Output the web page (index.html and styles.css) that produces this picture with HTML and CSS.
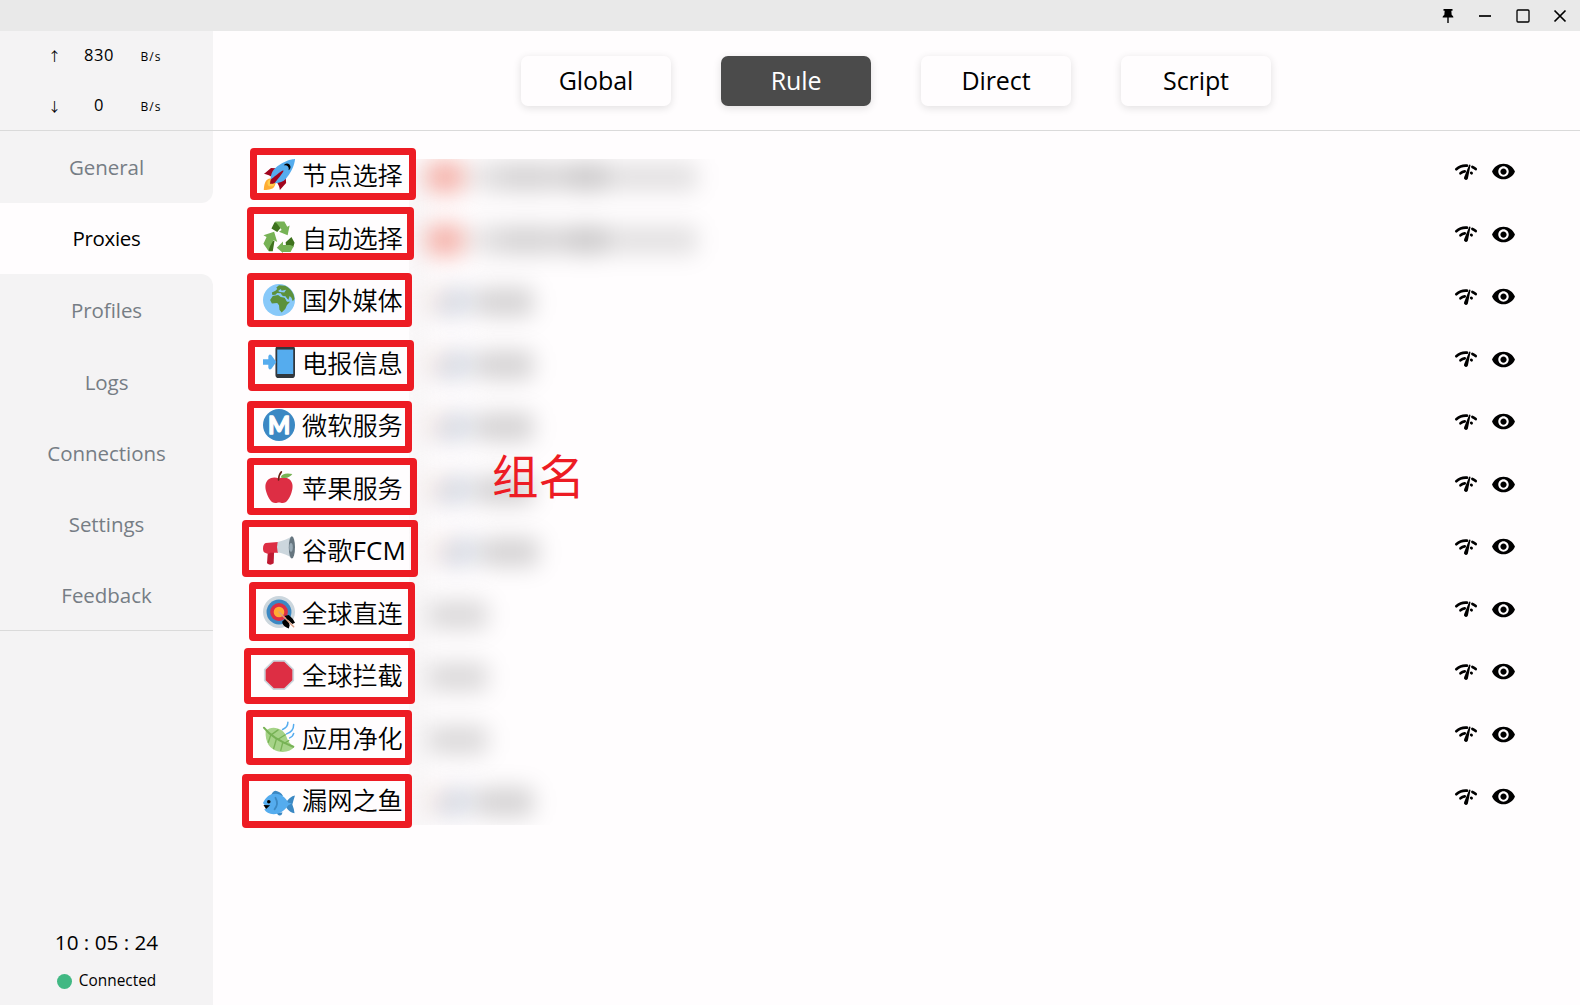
FILE: index.html
```html
<!DOCTYPE html>
<html lang="zh-CN">
<head>
<meta charset="utf-8">
<title>Proxies</title>
<link rel="stylesheet" href="styles.css">
</head>
<body>
<svg class="defs" width="0" height="0" aria-hidden="true">
  <symbol id="check" viewBox="0 0 24 24">
    <g fill="none" stroke="currentColor" stroke-width="2.7" stroke-linecap="round">
      <path d="M2.300 9.200C5.300 6.500 9 5.200 13 5.600"/>
      <path d="M18.400 6.900C19.700 7.500 20.700 8.200 21.700 9.100"/>
      <path d="M6.500 13.300C7.800 12.200 9.200 11.600 10.700 11.400"/>
      <path d="M17.200 12.900L17.600 13.200"/>
    </g>
    <path fill="currentColor" d="M15.200 4.800Q16.300 4.200 16.500 5.300L13.900 18.600A2 2 0 0 1 10.100 17.200Z"/>
  </symbol>
  <symbol id="eye" viewBox="0 0 24 24">
    <path fill="currentColor" d="M12 4.500C7 4.500 2.730 7.610 1 12c1.730 4.390 6 7.500 11 7.500s9.270-3.110 11-7.500c-1.730-4.390-6-7.500-11-7.500zM12 17c-2.760 0-5-2.240-5-5s2.240-5 5-5 5 2.240 5 5-2.240 5-5 5zm0-8c-1.660 0-3 1.340-3 3s1.340 3 3 3 3-1.340 3-3-1.340-3-3-3z"/>
  </symbol>
</svg>

<header class="titlebar">
  <svg class="win" viewBox="0 0 16 16"><path d="M3.500 1h9v1.700h-1.200l.4 4.300c1 .5 1.700 1.300 1.700 2.600H8.700V15H7.300V9.600H2.600C2.600 8.300 3.300 7.500 4.300 7l.4-4.300H3.500z"/></svg>
  <svg class="win line" viewBox="0 0 16 16"><path d="M2 8h12"/></svg>
  <svg class="win line thin" viewBox="0 0 16 16"><rect x="2" y="2" width="12" height="12" rx="1"/></svg>
  <svg class="win line" viewBox="0 0 16 16"><path d="M2.500 2.500l11 11M13.500 2.500l-11 11"/></svg>
</header>

<div class="app">
  <aside class="sidebar">
    <div class="traffic">
      <div class="speed"><span class="arrow">↑</span><span class="num">830</span><span class="unit">B/s</span></div>
      <div class="speed"><span class="arrow">↓</span><span class="num">0</span><span class="unit">B/s</span></div>
    </div>
    <nav class="menu">
      <a class="item before">General</a>
      <a class="item active">Proxies</a>
      <a class="item after">Profiles</a>
      <a class="item">Logs</a>
      <a class="item">Connections</a>
      <a class="item">Settings</a>
      <a class="item">Feedback</a>
    </nav>
    <div class="status">
      <div class="clock">10 : 05 : 24</div>
      <div class="conn"><i class="dot"></i><span>Connected</span></div>
    </div>
  </aside>

  <main class="main">
    <div class="modes">
      <button class="mode">Global</button>
      <button class="mode on">Rule</button>
      <button class="mode">Direct</button>
      <button class="mode">Script</button>
    </div>

    <div class="groups">
      <div class="current">
        <div class="now long"><i class="flag red"></i><i class="a"></i><i class="b"></i><i class="c"></i></div>
        <div class="now long"><i class="flag red"></i><i class="a"></i><i class="b"></i><i class="c"></i></div>
        <div class="now auto"><i class="flag us"></i><i class="t"></i></div>
        <div class="now auto"><i class="flag us"></i><i class="t"></i></div>
        <div class="now auto"><i class="flag us"></i><i class="t"></i></div>
        <div class="now auto"><i class="flag us"></i><i class="t"></i></div>
        <div class="now auto wide"><i class="flag us"></i><i class="t"></i></div>
        <div class="now short"><i class="t"></i></div>
        <div class="now short"><i class="t"></i></div>
        <div class="now short"><i class="t"></i></div>
        <div class="now auto"><i class="flag us"></i><i class="t"></i></div>
      </div>

      <div class="row">
        <svg class="emoji" viewBox="0 0 36 36"><path fill="#A0041E" d="M1 17l8-7 16 1 1 16-7 8s.001-5.999-6-12-12-6-12-6z"/><path fill="#FFAC33" d="M.973 35s-.036-7.979 2.985-11S15 21.187 15 21.187 14.999 29 11.999 32c-3 3-11.026 3-11.026 3z"/><circle fill="#FFCC4D" cx="9" cy="27" r="4"/><path fill="#55ACEE" d="M35.999 0s-10 0-22 10c-6 5-6 14-4 16s11 2 16-4c10-12 10-22 10-22z"/><path d="M26.999 5c-1.623 0-3.013.971-3.641 2.360.502-.227 1.055-.360 1.641-.360 2.209 0 4 1.791 4 4 0 .586-.133 1.139-.359 1.640 1.389-.627 2.359-2.017 2.359-3.640 0-2.209-1.791-4-4-4z"/><path fill="#A0041E" d="M8 28s0-4 1-5 13.001-10.999 14-10-9.001 13-10.001 14S8 28 8 28z"/></svg>
        <span class="name">节点选择</span>
        <span class="acts"><svg class="chk"><use href="#check"/></svg><svg class="see"><use href="#eye"/></svg></span>
      </div>
      <div class="row">
        <svg class="emoji" viewBox="0 0 36 36"><path fill="#3E721D" d="M9.500 8.500L13 1.500 17.500 1l3 6L16 12.500zM25.500 24l6.500-6 3.500 6.500-1.500 5h-8zM2 24l11-2-2 12H6.500z"/><path fill="#77B255" d="M13.500.5h10.500l3.300 6 2.700-1.500-2.300 11L18 12l3-1.800L16.500 4zM.5 25.500l3.500-7.500L.5 16l12-4L16 23.500 12 21.500 8 28l-2 5.500zM34.500 28.500l-3.500 6.500H22.500v1L15.500 30l7-7v4h8z"/></svg>
        <span class="name">自动选择</span>
        <span class="acts"><svg class="chk"><use href="#check"/></svg><svg class="see"><use href="#eye"/></svg></span>
      </div>
      <div class="row">
        <svg class="emoji" viewBox="0 0 36 36"><circle fill="#88C9F9" cx="18" cy="18" r="18"/><path fill="#5C913B" d="M15 4l3-2.500 7 .5c4 2 7.500 5.500 9.500 10l1 5-2 2.500-1.500-4-2-2-1.500 4.500-3-3.500-4-1.500-1.500-2.500-4-.5-2 2-3.500.5-.5-3 4-2 2-2z"/><path fill="#5C913B" d="M8 18l3-4.500 6-1 3 2 4.500 1 2.500 4.500h3.500L27 23.500l-2 4.500-4 4-2.500-3-.5-5-2-2.500-6 .5z"/><path fill="#88C9F9" d="M17 8l3-2.500 1 2 5-1-2 3-5-.5zM23.500 14l1.500-.5 3.500 5-1.500.5z"/></svg>
        <span class="name">国外媒体</span>
        <span class="acts"><svg class="chk"><use href="#check"/></svg><svg class="see"><use href="#eye"/></svg></span>
      </div>
      <div class="row">
        <svg class="emoji" viewBox="0 0 36 36"><rect x="14" width="22" height="36" rx="3.500" fill="#31373D"/><rect x="16" y="4" width="18" height="27.500" fill="#55ACEE"/><path fill="#55ACEE" d="M0 15h6v-3.500q1-3 3.500-1L15 18l-5.500 7.500q-2.500 2-3.500-1V21H0z"/></svg>
        <span class="name">电报信息</span>
        <span class="acts"><svg class="chk"><use href="#check"/></svg><svg class="see"><use href="#eye"/></svg></span>
      </div>
      <div class="row">
        <svg class="emoji" viewBox="0 0 36 36"><circle fill="#3B88C3" cx="18" cy="18" r="18"/><text class="letter" x="18" y="28" textLength="25" lengthAdjust="spacingAndGlyphs">M</text></svg>
        <span class="name">微软服务</span>
        <span class="acts"><svg class="chk"><use href="#check"/></svg><svg class="see"><use href="#eye"/></svg></span>
      </div>
      <div class="row">
        <svg class="emoji" viewBox="0 0 36 36"><path fill="#DD2E44" d="M18 8.500C22 6.500 27 7 30 9.500c4 3.500 4 9 2 15-2 6-5 11.500-10 11.500-1.500 0-2.500-.7-4-.7s-2.500.7-4 .7C9 36 6 30.500 4 24.500c-2-6-2-11.500 2-15C9 7 14 6.500 18 8.500z"/><path fill="#77B255" d="M20 7c1-3.500 6-5 13-3.500C31 7 25 9.500 20 7z"/><path fill="none" stroke="#662113" stroke-width="1.800" stroke-linecap="round" d="M17.500 10C17.500 6.500 18.500 3.500 20.700 1"/></svg>
        <span class="name">苹果服务</span>
        <span class="acts"><svg class="chk"><use href="#check"/></svg><svg class="see"><use href="#eye"/></svg></span>
      </div>
      <div class="row">
        <svg class="emoji" viewBox="0 0 36 36"><path fill="#BE1931" d="M5.500 19h7L12 33q-4 3-7.500 0z"/><path fill="#DD2E44" d="M3 10l14-1v12H8q-1.500 2-5 .5-3-1-3-5 0-5.500 3-6.500z"/><path fill="#CCD6DD" d="M16.500 9C22 7.500 28 5.500 32 3v24c-4-3.500-9-5-15.500-6.500q-1.500-6 0-11.500z"/><ellipse cx="32.500" cy="15" rx="3.500" ry="12.500" fill="#66757F"/><ellipse cx="31.500" cy="15" rx="2" ry="5" fill="#99AAB5"/></svg>
        <span class="name">谷歌<span class="latin">FCM</span></span>
        <span class="acts"><svg class="chk"><use href="#check"/></svg><svg class="see"><use href="#eye"/></svg></span>
      </div>
      <div class="row">
        <svg class="emoji" viewBox="0 0 36 36"><circle cx="18" cy="18" r="18" fill="#CCD6DD"/><circle cx="18" cy="18" r="14" fill="#3B88C3"/><circle cx="18" cy="18" r="10" fill="#DD2E44"/><circle cx="18" cy="18" r="6" fill="#FFAC33"/><path d="M21.500 29l5.500-5.500L30 33l-1 3.500q-7-2-7.500-7.500zM24 22.500l5-1q5 4 7 8.500l-3 1.500z"/><path fill="none" stroke="#D99E82" stroke-width="1.700" stroke-linecap="round" d="M18 18L34.500 34.500"/></svg>
        <span class="name">全球直连</span>
        <span class="acts"><svg class="chk"><use href="#check"/></svg><svg class="see"><use href="#eye"/></svg></span>
      </div>
      <div class="row">
        <svg class="emoji" viewBox="0 0 36 36"><path fill="#CCD6DD" d="M11.500 1h13L35 11.500v13L24.500 35h-13L1 24.500v-13z"/><path fill="#DD2E44" d="M12.200 3h11.600l9.200 9.200v11.600L23.800 33H12.200L3 23.800V12.200z"/></svg>
        <span class="name">全球拦截</span>
        <span class="acts"><svg class="chk"><use href="#check"/></svg><svg class="see"><use href="#eye"/></svg></span>
      </div>
      <div class="row">
        <svg class="emoji" viewBox="0 0 36 36"><path fill="#A6D388" d="M3 11c5-4.500 12-4.500 18-.5 6 4 5 9.500 9 14 1.500 2 3.500 3.500 5.500 4-3 5.500-12 7.500-19 5.500C8 32 2 24 3 11z"/><g fill="none" stroke="#77B255" stroke-linecap="round"><path stroke-width="2.200" d="M1 7.500C6 14 16 22 34 29"/><path stroke-width="1.500" d="M9 15L6 24M15 20.500L12 31M22 25L20 33M10 15l7-5M17 20.500l8-5M24 25l5-3"/></g><path fill="none" stroke="#55ACEE" stroke-width="1.700" stroke-linecap="round" d="M28 1.500c0 4-2 6.500-6 8M34.500 4c0 6-3 9-8 10.500M34.500 14c-.5 2.500-2 4-4.500 5"/></svg>
        <span class="name">应用净化</span>
        <span class="acts"><svg class="chk"><use href="#check"/></svg><svg class="see"><use href="#eye"/></svg></span>
      </div>
      <div class="row">
        <svg class="emoji" viewBox="0 0 36 36"><path fill="#3B88C3" d="M9 13q1.500-5 5-5.500 6 1 8.500 6zM25 22q5-8 11-9-2 6-3 10 2 5 2.500 10-5-.5-9-6zM15 32h7q-1 4-3.500 3.500Q16.500 35 15 32z"/><path fill="#55ACEE" d="M0 21.500C3 14.500 8 11 14 11c7 0 11.500 5 14.500 10l4 1-4 2C24 30.500 19 34 12 34c-5 0-9-2.500-10.500-5.500l3-1.500z"/><path fill="none" stroke="#3B88C3" stroke-width="2" stroke-linecap="round" d="M14 15.500q4 7-1 13"/><circle cx="6.500" cy="20" r="2"/><path d="M.5 23.500l7.500.5-4.500 4z"/></svg>
        <span class="name">漏网之鱼</span>
        <span class="acts"><svg class="chk"><use href="#check"/></svg><svg class="see"><use href="#eye"/></svg></span>
      </div>
    </div>
  </main>
</div>

<div class="marks">
  <i class="mark m1"></i><i class="mark m2"></i><i class="mark m3"></i><i class="mark m4"></i>
  <i class="mark m5"></i><i class="mark m6"></i><i class="mark m7"></i><i class="mark m8"></i>
  <i class="mark m9"></i><i class="mark m10"></i><i class="mark m11"></i>
  <span class="note">组名</span>
</div>
</body>
</html>
```
FILE: styles.css
```css
* { box-sizing: border-box; }
body {
  margin: 0;
  width: 1580px;
  height: 1005px;
  overflow: hidden;
  position: relative;
  display: flex;
  flex-direction: column;
  background: #fffdfe;
  color: #000;
  font-family: "Open Sans", "Noto Sans CJK SC", sans-serif;
}
.defs { position: absolute; }

/* title bar */
.titlebar {
  height: 31px;
  flex: none;
  background: #e9e9e9;
  display: flex;
  justify-content: flex-end;
  align-items: center;
  gap: 21.500px;
  padding-right: 12px;
}
.win { width: 16px; height: 16px; display: block; }
.line { fill: none; stroke: #000; stroke-width: 1.700; }
.thin { stroke-width: 1.300; }

.app { flex: 1; display: flex; min-height: 0; }

/* sidebar */
.sidebar {
  width: 213px;
  flex: none;
  display: flex;
  flex-direction: column;
}
.traffic {
  height: 100px;
  flex: none;
  background: #f4f3f4;
  border-bottom: 1px solid #dadada;
}
.speed {
  height: 50px;
  display: grid;
  grid-template-columns: 22px 67px 37px;
  align-items: center;
  justify-content: center;
  text-align: center;
  padding-bottom: 3px;
}
.arrow { font: 13px "Noto Sans CJK SC", sans-serif; width: 22px; padding-top: 1px; }
.num { font-size: 16.500px; letter-spacing: .6px; }
.unit { font-size: 12px; letter-spacing: 1px; padding-top: 3px; }
.menu {
  height: 500px;
  flex: none;
  display: flex;
  flex-direction: column;
  border-bottom: 1px solid #dadada;
}
.item {
  flex: 1;
  display: flex;
  align-items: center;
  justify-content: center;
  background: #f4f3f4;
  color: #767d85;
  font-size: 20.500px;
  letter-spacing: -.05px;
}
.active {
  flex: none;
  height: 71px;
  padding-bottom: 1px;
  background: #fffdfe;
  color: #000;
  letter-spacing: -.3px;
}
.before { flex: none; height: 72px; border-bottom-right-radius: 12px; }
.after { border-top-right-radius: 12px; padding-bottom: 1px; }
.status {
  flex: 1;
  background: #f4f3f4;
  display: flex;
  flex-direction: column;
  justify-content: flex-end;
  align-items: center;
  padding-bottom: 14px;
}
.clock { font-size: 20.700px; line-height: 30px; }
.conn {
  display: flex;
  align-items: center;
  gap: 7px;
  font-size: 15.400px;
  line-height: 20px;
  margin-top: 14px;
}
.dot { width: 15px; height: 15px; border-radius: 50%; background: #41b883; }

/* main */
.main { flex: 1; display: flex; flex-direction: column; }
.modes {
  height: 100px;
  flex: none;
  border-bottom: 1px solid #dadada;
  display: flex;
  justify-content: center;
  align-items: center;
  gap: 50px;
  padding-right: 1px;
}
.mode {
  width: 150px;
  height: 50px;
  border: 0;
  padding: 0 0 1px;
  border-radius: 7px;
  background: #fffdfe;
  color: #000;
  font: 25px "Open Sans", sans-serif;
  letter-spacing: -.1px;
  box-shadow: 0 2px 8px rgba(0, 0, 0, .12);
}
.mode.on { background: #4b4b4b; color: #fff; }

.groups { position: relative; padding: 12.500px 64px 0 50px; }
.row {
  height: 62.500px;
  display: flex;
  align-items: center;
  position: relative;
}
.emoji { width: 32px; height: 32px; flex: none; overflow: visible; }
.letter {
  fill: #fff;
  stroke: #fff;
  stroke-width: 1.500;
  stroke-linejoin: round;
  font: 700 28px Lato, sans-serif;
  text-anchor: middle;
}
.name {
  margin-left: 7px;
  padding-bottom: 1px;
  font-size: 25.200px;
  line-height: 36px;
  font-weight: 350;
  font-family: "Noto Sans CJK SC DemiLight", "Noto Sans CJK SC", sans-serif;
}
.latin { font: 400 26px/36px "Open Sans", sans-serif; letter-spacing: .2px; }
.acts {
  margin-left: auto;
  display: flex;
  align-items: center;
  gap: 13px;
  padding-bottom: 6px;
}
.chk { width: 24px; height: 24px; }
.see { width: 25px; height: 25px; }

/* obscured current-node column */
.current {
  position: absolute;
  left: 196px;
  top: 28px;
  width: 340px;
  height: 666px;
  overflow: hidden;
}
.now {
  height: 62.500px;
  display: flex;
  align-items: center;
  padding: 0 0 26px 17px;
  filter: blur(11px);
  box-shadow: inset 14px 0 #0000000c;
}
.now i { height: 30px; flex: none; border-radius: 8px; }
.now .red { width: 38px; height: 32px; background: #f5b3ab; }
.a { width: 96px; margin-left: 4px; background: linear-gradient(90deg, #00000012, #0000002a 50%, #00000024); }
.b { width: 46px; background: #00000030; }
.c { width: 88px; background: #0000001b; }
.us { width: 46px; margin-left: 2px; background: linear-gradient(115deg, #f3e6e2 25%, #d2d6e2 45%, #e6e9ed); }
.auto .t { width: 58px; margin-left: 2px; background: #00000029; }
.now.wide { padding-left: 22px; }
.short .t { width: 60px; margin-left: 2px; background: #00000023; }

/* annotation layer */
.marks { position: absolute; inset: 0; pointer-events: none; }
.mark { position: absolute; border: 7px solid #ed1c24; border-radius: 4px; }
.m1 { left: 250px; top: 147.500px; width: 166px; height: 52.500px; }
.m2 { left: 247px; top: 206.500px; width: 167px; height: 53.500px; }
.m3 { left: 247px; top: 272.500px; width: 165px; height: 54.500px; }
.m4 { left: 248px; top: 340px; width: 166px; height: 51px; }
.m5 { left: 247px; top: 400.500px; width: 165px; height: 52.500px; }
.m6 { left: 247px; top: 457.500px; width: 170px; height: 57.500px; }
.m7 { left: 242px; top: 520px; width: 176px; height: 57px; }
.m8 { left: 249px; top: 581.500px; width: 166px; height: 59.500px; }
.m9 { left: 244px; top: 648px; width: 171px; height: 56px; }
.m10 { left: 246px; top: 710px; width: 166px; height: 55px; }
.m11 { left: 242px; top: 773.500px; width: 170px; height: 54.500px; }
.note {
  position: absolute;
  left: 492px;
  top: 440px;
  font: 400 46.500px/68px "Noto Sans CJK SC", sans-serif;
  color: #ed1c24;
}
```
